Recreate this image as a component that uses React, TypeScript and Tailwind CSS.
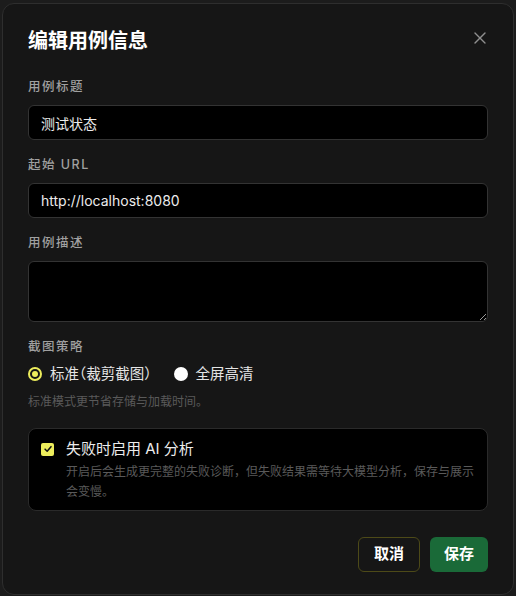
import React, { useState } from 'react';
import { X } from 'lucide-react';

const font = { fontFamily: '"Inter", "Noto Sans CJK SC", sans-serif' };

const Label = ({ children }: { children: React.ReactNode }) => (
  <div className="text-[12.5px] leading-5 font-medium tracking-[0.12em] text-[#a0a0a0] mb-2">{children}</div>
);

const Radio = ({ checked, label, onClick }: { checked: boolean; label: string; onClick: () => void }) => (
  <button
    type="button"
    onClick={onClick}
    className="flex items-center gap-[8px] text-[14.5px] leading-6 text-[#e5e5e5] [font-feature-settings:'halt']"
  >
    {checked ? (
      <span className="w-[14px] h-[14px] rounded-full border-2 border-[#eded5c] flex items-center justify-center">
        <span className="w-[6px] h-[6px] rounded-full bg-[#eded5c]" />
      </span>
    ) : (
      <span className="w-[14px] h-[14px] rounded-full bg-white" />
    )}
    {label}
  </button>
);

export default function App() {
  const [mode, setMode] = useState<'crop' | 'full'>('crop');
  const [ai, setAi] = useState(true);

  return (
    <div className="w-[516px] h-[596px] bg-[#1c1c1c] overflow-hidden" style={font}>
      <div className="ml-[2px] mt-[3px] w-[512px] h-[592px] bg-[#161616] border border-[#2e2e2e] rounded-xl px-[25px] pt-[22px]">
        {/* header */}
        <div className="flex items-center justify-between h-7">
          <h2 className="text-[20px] font-bold text-white mt-[2px]">编辑用例信息</h2>
          <X className="w-5 h-5 text-[#8f8f8f] -mt-1 -mr-[2px]" strokeWidth={1.6} />
        </div>

        <div className="mt-[23px]">
          <Label>用例标题</Label>
          <input
            defaultValue="测试状态"
            className="w-full h-[35px] bg-black border border-[#333] rounded-md px-3 text-[14px] text-[#ececec] outline-none"
          />
        </div>

        <div className="mt-[15px]">
          <Label>起始 URL</Label>
          <input
            defaultValue="http://localhost:8080"
            className="w-full h-[35px] bg-black border border-[#333] rounded-md px-3 text-[14px] text-[#ececec] outline-none"
          />
        </div>

        <div className="mt-[15px]">
          <Label>用例描述</Label>
          <textarea className="block w-full h-[61px] bg-black border border-[#333] rounded-md px-3 py-2 text-[14px] text-[#ececec] outline-none" />
        </div>

        <div className="mt-[15px]">
          <div className="text-[12.5px] leading-5 font-medium tracking-[0.12em] text-[#a0a0a0]">截图策略</div>
          <div className="flex items-center gap-[22px] mt-[5px]">
            <Radio checked={mode === 'crop'} label="标准（裁剪截图）" onClick={() => setMode('crop')} />
            <Radio checked={mode === 'full'} label="全屏高清" onClick={() => setMode('full')} />
          </div>
          <div className="mt-[6px] text-[12px] leading-5 text-[#5a5a5a]">标准模式更节省存储与加载时间。</div>
        </div>

        {/* AI analysis toggle */}
        <div className="mt-4 bg-black border border-[#2a2a2a] rounded-lg pl-3 pr-3 pt-[8px] pb-[8px]">
          <div className="flex items-center gap-3 h-6">
            <button
              type="button"
              onClick={() => setAi(!ai)}
              className={`w-[13px] h-[13px] rounded-[2px] flex items-center justify-center ${ai ? 'bg-[#eded5c]' : 'bg-white'}`}
            >
              {ai && (
                <svg viewBox="0 0 12 12" className="w-[10px] h-[10px]">
                  <path d="M2.5 6.2 L5 8.6 L9.6 3.2" fill="none" stroke="#111" strokeWidth="1.8" strokeLinecap="round" strokeLinejoin="round" />
                </svg>
              )}
            </button>
            <span className="text-[15px] text-[#ececec]">失败时启用 AI 分析</span>
          </div>
          <p className="pl-[25px] text-[12px] leading-5 text-[#5a5a5a] mt-[1px]">
            开启后会生成更完整的失败诊断，但失败结果需等待大模型分析，保存与展示会变慢。
          </p>
        </div>

        {/* footer */}
        <div className="flex justify-end gap-[10px] mt-[26px]">
          <button className="h-[35px] px-[15px] rounded-md border border-[#4d4a18] bg-[#161616] text-[15px] font-bold text-white">取消</button>
          <button className="h-[35px] px-[14px] rounded-md bg-[#1a6a38] text-[15px] font-bold text-white">保存</button>
        </div>
      </div>
    </div>
  );
}
